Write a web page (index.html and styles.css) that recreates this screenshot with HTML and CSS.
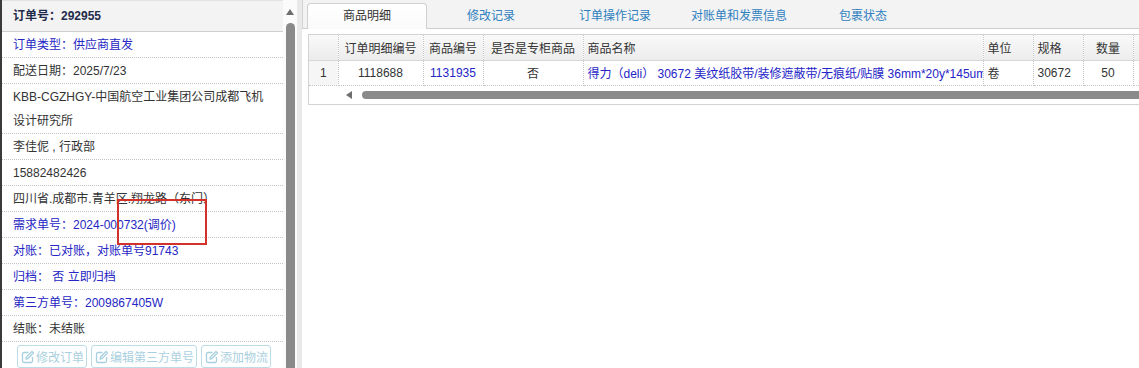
FILE: index.html
```html
<!DOCTYPE html>
<html lang="zh-CN">
<head>
<meta charset="utf-8">
<title>订单详情</title>
<link rel="stylesheet" href="styles.css">
</head>
<body>
<div class="page">
  <aside class="sidebar">
    <div class="info">
      <div class="info-head">订单号：292955</div>
      <div class="row blue">订单类型：供应商直发</div>
      <div class="row">配送日期：2025/7/23</div>
      <div class="row">KBB-CGZHGY-中国航空工业集团公司成都飞机<br>设计研究所</div>
      <div class="row">李佳伲 , 行政部</div>
      <div class="row">15882482426</div>
      <div class="row">四川省.成都市.青羊区.翔龙路（东门）</div>
      <div class="row blue">需求单号：2024-000732(调价)</div>
      <div class="row blue">对账：已对账，对账单号91743</div>
      <div class="row blue">归档：&nbsp;否 立即归档</div>
      <div class="row blue">第三方单号：2009867405W</div>
      <div class="row">结账：未结账</div>
      <div class="actions">
        <button class="btn"><svg class="ico" viewBox="0 0 14 14"><path d="M7.5 2.5H3a1.5 1.5 0 0 0-1.5 1.5v7A1.5 1.5 0 0 0 3 12.5h7a1.5 1.5 0 0 0 1.5-1.5V7"/><path d="M11 1.5l1.5 1.5-5.5 5.5-2 .5.5-2z"/></svg>修改订单</button>
        <button class="btn"><svg class="ico" viewBox="0 0 14 14"><path d="M7.5 2.5H3a1.5 1.5 0 0 0-1.5 1.5v7A1.5 1.5 0 0 0 3 12.5h7a1.5 1.5 0 0 0 1.5-1.5V7"/><path d="M11 1.5l1.5 1.5-5.5 5.5-2 .5.5-2z"/></svg>编辑第三方单号</button>
        <button class="btn"><svg class="ico" viewBox="0 0 14 14"><path d="M7.5 2.5H3a1.5 1.5 0 0 0-1.5 1.5v7A1.5 1.5 0 0 0 3 12.5h7a1.5 1.5 0 0 0 1.5-1.5V7"/><path d="M11 1.5l1.5 1.5-5.5 5.5-2 .5.5-2z"/></svg>添加物流</button>
      </div>
    </div>
    <div class="vscroll">
      <span class="up-arrow"></span>
      <span class="vthumb"></span>
    </div>
  </aside>
  <div class="gutter"></div>
  <main class="main">
    <nav class="tabs">
      <span class="tab active">商品明细</span>
      <span class="tab">修改记录</span>
      <span class="tab">订单操作记录</span>
      <span class="tab">对账单和发票信息</span>
      <span class="tab">包裹状态</span>
    </nav>
    <div class="content">
      <div class="grid">
        <table class="gtable">
          <colgroup>
            <col class="c-rn"><col class="c-id"><col class="c-code"><col class="c-flag"><col class="c-name"><col class="c-unit"><col class="c-spec"><col class="c-qty"><col class="c-more">
          </colgroup>
          <thead>
            <tr>
              <th class="rn"></th>
              <th>订单明细编号</th>
              <th>商品编号</th>
              <th>是否是专柜商品</th>
              <th class="left">商品名称</th>
              <th class="left">单位</th>
              <th class="left">规格</th>
              <th>数量</th>
              <th></th>
            </tr>
          </thead>
          <tbody>
            <tr>
              <td class="rn">1</td>
              <td>1118688</td>
              <td class="blue">1131935</td>
              <td>否</td>
              <td class="left blue">得力（deli） 30672 美纹纸胶带/装修遮蔽带/无痕纸/贴膜 36mm*20y*145um 单卷</td>
              <td class="left">卷</td>
              <td class="left">30672</td>
              <td>50</td>
              <td></td>
            </tr>
          </tbody>
        </table>
        <div class="hscroll">
          <span class="left-arrow"></span>
          <span class="hthumb"></span>
        </div>
      </div>
    </div>
  </main>
</div>
<div class="annot"></div>
</body>
</html>
```

FILE: styles.css
```css
* { box-sizing: border-box; }

html, body {
  margin: 0;
  padding: 0;
  height: 368px;
  overflow: hidden;
  background: #fff;
  font-family: "Liberation Sans", "Noto Sans CJK SC", sans-serif;
  font-size: 12px;
  color: #333;
}

.page {
  display: flex;
  height: 368px;
  width: 1139px;
  overflow: hidden;
}

/* ---------- sidebar ---------- */
.sidebar {
  display: flex;
  width: 297px;
  flex: none;
  border-left: 2px solid #3a3a3a;
  background: #fff;
}

.info {
  width: 281px;
  flex: none;
}

.info-head {
  height: 32px;
  line-height: 30px;
  padding-left: 11px;
  background: #f3f3f3;
  border-top: 1px solid #e2e2e2;
  border-bottom: 1px solid #cfcfcf;
  font-weight: bold;
  color: #1f2b4b;
}

.row {
  padding: 1px 6px 0 11px;
  line-height: 24px;
  border-bottom: 1px dotted #c4c4c4;
  color: #333;
  white-space: nowrap;
}

.row.blue { color: #2626c4; }

.actions {
  display: flex;
  gap: 4px;
  padding: 3px 0 0 15px;
}

.btn {
  display: inline-flex;
  align-items: center;
  gap: 1px;
  height: 23px;
  padding: 0 2px 0 3px;
  background: #fff;
  border: 1px solid #bcdde7;
  border-radius: 3px;
  color: #a9d0de;
  font-family: inherit;
  font-size: 12px;
}

.ico {
  width: 14px;
  height: 14px;
  fill: none;
  stroke: #a9d0de;
  stroke-width: 1.3;
  stroke-linejoin: round;
}

.vscroll {
  width: 14px;
  flex: none;
  display: flex;
  flex-direction: column;
  align-items: center;
  padding-top: 9px;
  background: #fbfbfb;
}

.up-arrow {
  width: 0;
  height: 0;
  border-left: 4.5px solid transparent;
  border-right: 4.5px solid transparent;
  border-bottom: 6px solid #6e6e6e;
}

.vthumb {
  margin-top: 8px;
  width: 9px;
  flex: 1;
  background: #8a8a8a;
  border-radius: 4.5px 4.5px 0 0;
}

.gutter {
  width: 5px;
  flex: none;
  background: #e9e9e9;
}

/* ---------- main ---------- */
.main {
  flex: 1;
  min-width: 0;
  overflow: hidden;
  display: flex;
  flex-direction: column;
  background: #fff;
}

.tabs {
  display: flex;
  gap: 4px;
  height: 29px;
  padding: 3px 0 0 4px;
  background: #f3f3f3;
  border-left: 1px solid #d3d3d3;
  border-bottom: 1px solid #cdcdcd;
}

.tab {
  width: 120px;
  height: 26px;
  text-align: center;
  line-height: 24px;
  color: #2f80bf;
  border: 1px solid transparent;
  border-bottom: none;
}

.tab.active {
  color: #333;
  background: linear-gradient(#ffffff, #fafafa);
  border-color: #d0d0d0;
  border-radius: 4px 4px 0 0;
}

.content {
  padding: 5px 0 0 6px;
}

.grid {
  width: 906px;
  border: 1px solid #d3d3d3;
  background: #fff;
}

.gtable {
  table-layout: fixed;
  border-collapse: collapse;
  width: 905px;
}

.c-rn { width: 29px; }
.c-id { width: 85px; }
.c-code { width: 60px; }
.c-flag { width: 100px; }
.c-name { width: 400px; }
.c-unit { width: 50px; }
.c-spec { width: 50px; }
.c-qty { width: 50px; }
.c-more { width: 81px; }

.gtable th,
.gtable td {
  height: 25px;
  padding: 0 4px;
  text-align: center;
  white-space: nowrap;
  overflow: hidden;
  border-right: 1px dotted #c6c6c6;
  font-weight: normal;
  color: #333;
}

.gtable th {
  background: linear-gradient(#f9f9f9, #ececec);
  border-bottom: 1px solid #d8d8d8;
}

.gtable td {
  border-bottom: 1px dotted #c6c6c6;
}

.gtable .left { text-align: left; }
.gtable td.blue { color: #2424c8; }
.gtable td.rn { background: #f6f6f6; }

.hscroll {
  display: flex;
  align-items: center;
  gap: 10px;
  height: 18px;
  padding-left: 37px;
}

.left-arrow {
  width: 0;
  height: 0;
  border-top: 4px solid transparent;
  border-bottom: 4px solid transparent;
  border-right: 6px solid #6e6e6e;
}

.hthumb {
  flex: 1;
  height: 8px;
  background: #8a8a8a;
  border-radius: 4px 0 0 4px;
}

/* ---------- annotation overlay ---------- */
.annot {
  position: absolute;
  left: 117px;
  top: 199px;
  width: 90px;
  height: 46px;
  border: 2px solid #d3312c;
  pointer-events: none;
}
```
